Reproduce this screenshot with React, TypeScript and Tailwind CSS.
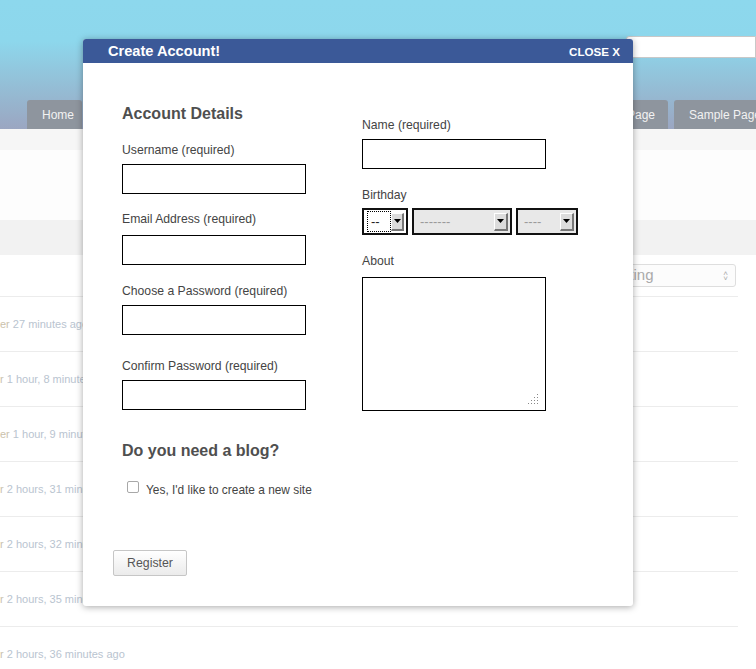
import React from "react";

const rows = [
  ["er", "27 minutes ago"],
  ["r", "1 hour, 8 minutes ago"],
  ["er", "1 hour, 9 minutes ago"],
  ["r", "2 hours, 31 minutes ago"],
  ["r", "2 hours, 32 minutes ago"],
  ["r", "2 hours, 35 minutes ago"],
  ["r", "2 hours, 36 minutes ago"],
];

const tabs = [
  { label: "Home", w: "w-[55px]", pad: "pl-[15px]" },
  { label: "Activity", w: "w-[114px]", pad: "pl-[15px]" },
  { label: "Members", w: "w-[115px]", pad: "pl-[15px]" },
  { label: "Groups", w: "w-[114px]", pad: "pl-[15px]" },
  { label: "Forums", w: "w-[115px]", pad: "pl-[15px]" },
  { label: "Sample Page", w: "w-[98px]", pad: "pl-[13px]" },
  { label: "Sample Page", w: "w-[98px]", pad: "pl-[15px]" },
];

const Label = ({ children, className = "" }: any) => (
  <div className={`text-[12.2px] leading-[16px] text-[#444] ${className}`}>{children}</div>
);

const Field = ({ className = "" }: any) => (
  <input
    readOnly
    className={`block w-[184px] h-[30px] border border-black bg-white outline-none ${className}`}
  />
);

const FakeSelect = ({ text, w, disabled, focus }: any) => (
  <div className={`${w} h-[27px] border-2 border-[#111] flex items-center pl-[3px] pr-[2px] ${disabled ? "bg-[#e8e8e8]" : "bg-white"}`}>
    <div className="flex-1 h-full flex items-center">
      <span
        className={`text-[13px] leading-[13px] px-[3px] ${disabled ? "text-[#9a9a9a]" : "text-[#222]"} ${focus ? "border border-dotted border-black py-[3px] w-[24px]" : ""}`}
      >
        {text}
      </span>
    </div>
    <div className="w-[14px] h-[18px] bg-[#dcdcdc] border-t border-l border-t-white border-l-white border-r-2 border-b-2 border-r-[#777] border-b-[#777] flex items-center justify-center">
      <svg width="7" height="4" viewBox="0 0 7 4">
        <path d="M0 0h7L3.5 4z" fill="#000" />
      </svg>
    </div>
  </div>
);

export default function App() {
  return (
    <div className="relative w-[756px] h-[669px] overflow-hidden bg-white font-['Liberation_Sans',Arial,sans-serif]">
      {/* page behind the dialog */}
      <div className="h-[129px] flex flex-col bg-[linear-gradient(to_bottom,#8dd8ed_0%,#8dd7ec_32%,#9ba6c1_100%)]">
        <div className="pt-[36px] flex justify-end">
          <div className="w-[130px] h-[22px] bg-white border border-[#c8c8c8] rounded-l-[3px]" />
        </div>
        <div className="mt-auto flex gap-[6px] pl-[27px] whitespace-nowrap">
          {tabs.map((t, i) => (
            <div
              key={i}
              className={`${t.w} ${t.pad} shrink-0 h-[29px] rounded-t-[3px] bg-[#8e959e] text-[#f2f2f2] text-[12px] flex items-center`}
            >
              {t.label}
            </div>
          ))}
        </div>
      </div>
      <div className="h-[21px] bg-[#f6f6f6]" />
      <div className="h-[70px] bg-[#fdfdfd]" />
      <div className="h-[35px] bg-[#f2f2f2]" />
      <div className="h-[41px] flex items-center justify-end pr-[20px]">
        <div className="w-[140px] h-[23px] border border-[#dedede] rounded-[3px] bg-[#fcfcfc] flex items-center pl-[9px] pr-[7px]">
          <span className="flex-1 text-[15px] text-[#aaa]">Sorting</span>
          <span className="text-[8px] leading-[5px] text-[#aaa] flex flex-col">
            <span>˄</span>
            <span>˅</span>
          </span>
        </div>
      </div>
      <div className="w-[738px]">
        {rows.map(([a, b], i) => (
          <div key={i} className="h-[55px] border-t border-[#ececec] flex items-center text-[11px] whitespace-nowrap">
            <span className="text-[#cbc2ac]">{a}</span>
            <span className="text-[#b9c4d0]">&nbsp;{b}</span>
          </div>
        ))}
      </div>

      {/* dialog */}
      <div className="absolute left-[83px] top-[39px] w-[550px] h-[567px] bg-white rounded-[3px] shadow-[0_1px_7px_rgba(0,0,0,0.35)]">
        <div className="h-[24px] bg-[#3b5998] rounded-t-[3px] flex items-center justify-between pl-[25px] pr-[13px] pt-[1px] text-white font-bold">
          <span className="text-[14.6px]">Create Account!</span>
          <span className="text-[11.6px]">CLOSE X</span>
        </div>
        <div className="grid grid-cols-[240px_1fr] pl-[39px]">
          <div>
            <div className="mt-[40px] text-[16px] leading-[22px] font-bold text-[#4f4f4f]">Account Details</div>
            <Label className="mt-[17px]">Username (required)</Label>
            <Field className="mt-[6px]" />
            <Label className="mt-[17px]">Email Address (required)</Label>
            <Field className="mt-[8px]" />
            <Label className="mt-[18px]">Choose a Password (required)</Label>
            <Field className="mt-[6px]" />
            <Label className="mt-[23px]">Confirm Password (required)</Label>
            <Field className="mt-[6px]" />
            <div className="mt-[31px] text-[16px] leading-[20px] font-bold text-[#4f4f4f]">Do you need a blog?</div>
            <div className="mt-[20px] flex items-start pl-[5px]">
              <div className="w-[12px] h-[12px] border border-[#a8a8a8] rounded-[2px] bg-white" />
              <span className="ml-[7px] mt-[1px] text-[11.9px] leading-[16px] text-[#444]">Yes, I'd like to create a new site</span>
            </div>
          </div>
          <div>
            <Label className="mt-[54px]">Name (required)</Label>
            <Field className="mt-[6px]" />
            <Label className="mt-[18px]">Birthday</Label>
            <div className="mt-[5px] flex gap-[4px]">
              <FakeSelect text="--" w="w-[46px]" focus />
              <FakeSelect text="-------" w="w-[100px]" disabled />
              <FakeSelect text="----" w="w-[62px]" disabled />
            </div>
            <Label className="mt-[18px]">About</Label>
            <div className="mt-[8px] relative w-[184px] h-[134px] border border-black bg-white">
              <svg className="absolute right-[6px] bottom-[6px]" width="11" height="11" viewBox="0 0 11 11">
                {[
                  [9, 1], [9, 4], [6, 4], [9, 7], [6, 7], [3, 7], [9, 10], [6, 10], [3, 10], [0, 10],
                ].map(([x, y], i) => (
                  <rect key={i} x={x} y={y} width="1" height="1" fill="#888" />
                ))}
              </svg>
            </div>
          </div>
        </div>
        <div className="pl-[30px] mt-[52px]">
          <button className="w-[74px] h-[26px] border border-[#c6c6c6] rounded-[2px] bg-[linear-gradient(to_bottom,#ffffff,#ebebeb)] text-[12.3px] text-[#555]">
            Register
          </button>
        </div>
      </div>
    </div>
  );
}
